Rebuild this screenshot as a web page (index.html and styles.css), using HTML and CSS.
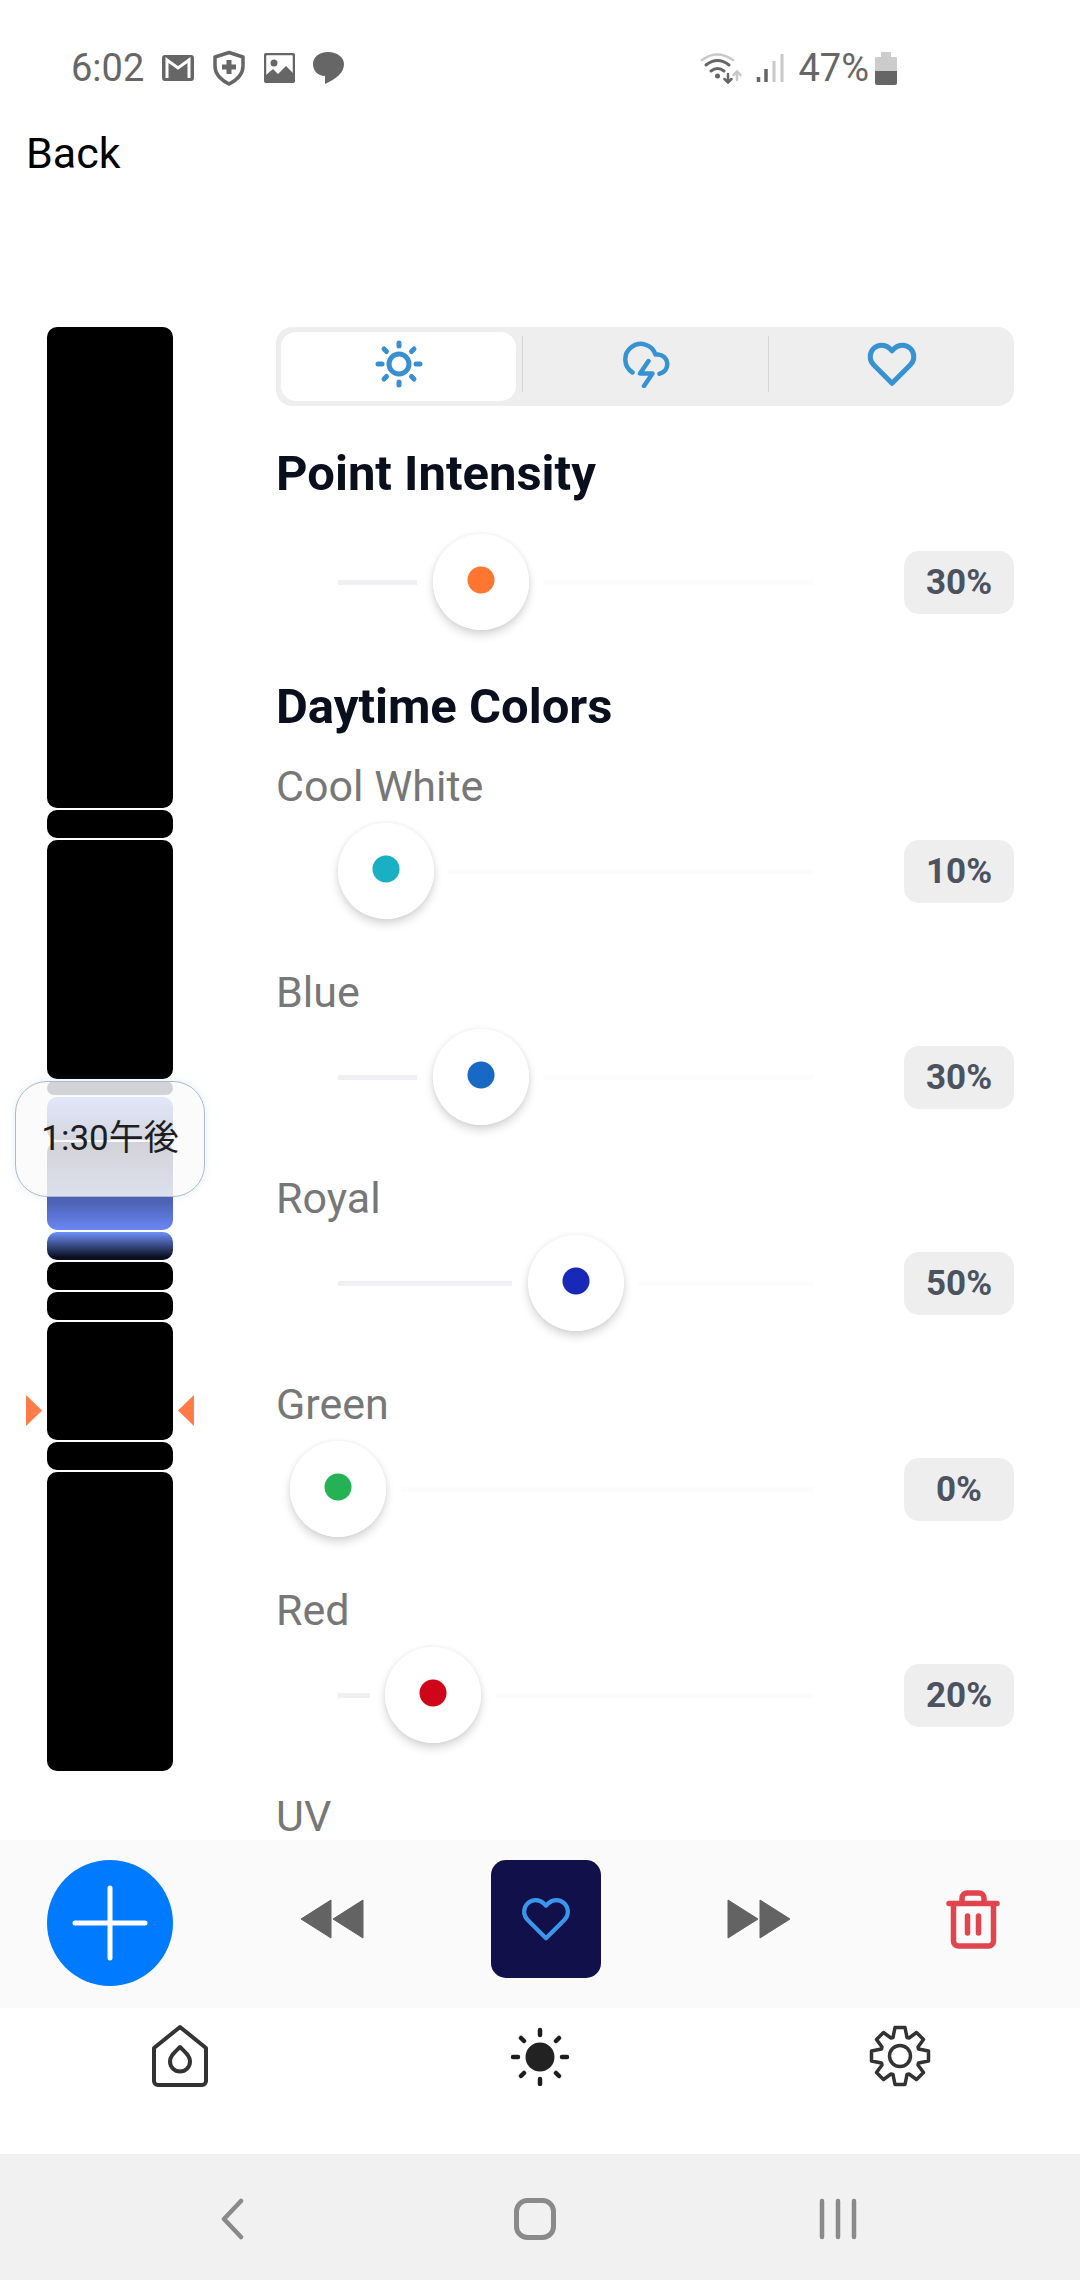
FILE: index.html
```html
<!DOCTYPE html>
<html lang="en">
<head>
<meta charset="utf-8">
<meta name="viewport" content="width=device-width, initial-scale=1">
<title>Light Schedule</title>
<link rel="stylesheet" href="styles.css">
</head>
<body>
<div class="app">
  <div class="status">
    <div class="status-group status-left">
      <span class="clock">6:02</span>
      <svg width="32" height="26" viewBox="0 0 32 26"><rect x="0" y="0" width="32" height="26" rx="3" fill="#666"/><path d="M5 23V5l11 8 11-8v18" fill="none" stroke="#fff" stroke-width="3"/></svg>
      <svg width="34" height="36" viewBox="0 0 34 36"><path d="M17 2.500L31 7v9c0 8-6 14-14 18C9 30 3 24 3 16V7z" fill="none" stroke="#666" stroke-width="3.500" stroke-linejoin="round"/><path d="M17 10v14M10 17h14" stroke="#666" stroke-width="5"/></svg>
      <svg width="31" height="30" viewBox="0 0 31 30"><rect x="1" y="1" width="29" height="28" rx="2" fill="none" stroke="#666" stroke-width="2.500"/><circle cx="10" cy="10" r="3.500" fill="#666"/><path d="M2 22l7-6 5 5 8-8 8 8v7H2z" fill="#666"/></svg>
      <svg width="31" height="32" viewBox="0 0 31 32"><path d="M15 0c9 0 16 5 16 12 0 9-8 15-19 20v-8C5 24 0 19 0 12 0 5 6 0 15 0z" fill="#666"/></svg>
    </div>
    <div class="status-group status-right">
      <svg width="42" height="32" viewBox="0 0 42 32" fill="none" stroke-linecap="round"><path d="M2 8Q17-3 33 8" stroke="#c8c8c8" stroke-width="2.500"/><path d="M6 13q11.500-9 23 0M11 19q6.500-5 13 0" stroke="#666" stroke-width="3"/><circle cx="17.500" cy="24" r="2.500" fill="#666"/><path d="M28 22v8M24.500 27l3.500 3.500 3.500-3.500" stroke="#666" stroke-width="2.500"/><path d="M37 28v-8M33.500 23l3.500-3.500 3.500 3.500" stroke="#c8c8c8" stroke-width="2.500"/></svg>
      <svg width="28" height="30" viewBox="0 0 28 30"><path d="M2.500 24v5M10 16v13" stroke="#666" stroke-width="3.500"/><path d="M18 8v21M26 1v28" stroke="#c8c8c8" stroke-width="3"/></svg>
      <span class="charge">47%</span>
      <svg width="22" height="33" viewBox="0 0 22 33"><path d="M6 0h10v5h5a1 1 0 0 1 1 1v13H0V6a1 1 0 0 1 1-1h5z" fill="#ccc"/><path d="M0 19h22v12a2 2 0 0 1-2 2H2a2 2 0 0 1-2-2z" fill="#666"/></svg>
    </div>
  </div>

  <header class="header"><a class="back" href="#">Back</a></header>

  <main class="main">
    <section class="timeline" aria-label="Schedule">
      <div class="segment" style="height:481px"></div>
      <div class="segment" style="height:28px"></div>
      <div class="segment" style="height:239px"></div>
      <div class="segment dawn" style="height:14px"></div>
      <div class="segment fade-out-slow" style="height:43px"></div>
      <div class="segment fade-in" style="height:88px"></div>
      <div class="segment fade-out" style="height:28px"></div>
      <div class="segment" style="height:28px"></div>
      <div class="segment" style="height:28px"></div>
      <div class="segment" style="height:118px"></div>
      <div class="segment" style="height:28px"></div>
      <div class="segment" style="height:299px"></div>
      <div class="time-bubble">1:30午後</div>
      <div class="now-marker">
        <svg width="16" height="31" viewBox="0 0 16 31"><path d="M0 0l16 15.500L0 31z" fill="#ff7b47"/></svg>
        <svg width="16" height="31" viewBox="0 0 16 31"><path d="M16 0v31L0 15.500z" fill="#ff7b47"/></svg>
      </div>
    </section>

    <section class="panel">
      <div class="tabs" role="tablist">
        <button class="tab selected" role="tab" aria-selected="true" aria-label="Sun">
          <svg width="50" height="50" viewBox="0 0 50 50" fill="none" stroke="#3a8fd0" stroke-width="5" stroke-linecap="round"><circle cx="25" cy="25" r="10"/><path d="M25 4v3M25 43v3M4 25h4M42 25h4M10 10l2.500 2.500M37.500 37.500L40 40M40 10l-2.500 2.500M12.500 37.500L10 40"/></svg>
        </button>
        <button class="tab" role="tab" aria-selected="false" aria-label="Storm">
          <svg width="48" height="48" viewBox="0 0 48 48" fill="none" stroke="#3792d2" stroke-width="4.500" stroke-linecap="round" stroke-linejoin="round"><path d="M10.500 32.500A15.500 15.500 0 1 1 33.500 14.500H36a9.700 9.700 0 0 1 1.500 19.200M26.500 21L18 33.500h12.500L22 46"/></svg>
        </button>
        <button class="tab" role="tab" aria-selected="false" aria-label="Favorites">
          <svg width="50" height="50" viewBox="0 0 24 24" fill="none" stroke="#3792d2" stroke-width="2.400" stroke-linejoin="round"><path d="M20.840 4.610a5.500 5.500 0 0 0-7.780 0L12 5.670l-1.060-1.060a5.500 5.500 0 0 0-7.780 7.780l1.060 1.060L12 21.230l7.780-7.780 1.060-1.060a5.500 5.500 0 0 0 0-7.780z"/></svg>
        </button>
      </div>

      <h2 class="title" id="intensity">Point Intensity</h2>
      <div class="row">
        <input class="slider orange" type="range" aria-labelledby="intensity" value="30" style="--value:30">
        <output class="badge">30%</output>
      </div>

      <h2 class="title">Daytime Colors</h2>
      <label class="label first" for="cool">Cool White</label>
      <div class="row">
        <input class="slider cyan" id="cool" type="range" value="10" style="--value:10">
        <output class="badge" for="cool">10%</output>
      </div>
      <label class="label" for="blue">Blue</label>
      <div class="row">
        <input class="slider blue" id="blue" type="range" value="30" style="--value:30">
        <output class="badge" for="blue">30%</output>
      </div>
      <label class="label" for="royal">Royal</label>
      <div class="row">
        <input class="slider royal" id="royal" type="range" value="50" style="--value:50">
        <output class="badge" for="royal">50%</output>
      </div>
      <label class="label" for="green">Green</label>
      <div class="row">
        <input class="slider green" id="green" type="range" value="0" style="--value:0">
        <output class="badge" for="green">0%</output>
      </div>
      <label class="label" for="red">Red</label>
      <div class="row">
        <input class="slider red" id="red" type="range" value="20" style="--value:20">
        <output class="badge" for="red">20%</output>
      </div>
      <div class="label">UV</div>
    </section>
  </main>

  <div class="toolbar">
    <button class="add" aria-label="Add point"><svg width="76" height="76" viewBox="0 0 76 76"><path d="M38 3v70M3 38h70" stroke="#fff" stroke-width="5" stroke-linecap="round"/></svg></button>
    <button class="plain" aria-label="Previous point"><svg width="64" height="40" viewBox="0 0 64 40"><path d="M1 20L31 1v38zM33 20L63 1v38z" fill="#636363" stroke="#636363" stroke-linejoin="round"/></svg></button>
    <button class="favorite" aria-label="Favorite"><svg width="50" height="46" viewBox="0.500 1 23 22" fill="none" stroke="#3a96ea" stroke-width="2" stroke-linejoin="round"><path d="M20.840 4.610a5.500 5.500 0 0 0-7.780 0L12 5.670l-1.060-1.060a5.500 5.500 0 0 0-7.780 7.780l1.060 1.060L12 21.230l7.780-7.780 1.060-1.060a5.500 5.500 0 0 0 0-7.780z"/></svg></button>
    <button class="plain" aria-label="Next point"><svg width="64" height="40" viewBox="0 0 64 40"><path d="M63 20L33 1v38zM31 20L1 1v38z" fill="#636363" stroke="#636363" stroke-linejoin="round"/></svg></button>
    <button class="trash" aria-label="Delete"><svg width="54" height="60" viewBox="0 0 54 60" fill="none" stroke="#e0444c" stroke-width="5.500" stroke-linecap="round" stroke-linejoin="round"><path d="M3 14.500h48M7.500 15v37a5 5 0 0 0 5 5h30a5 5 0 0 0 5-5V15M16 14V9a5 5 0 0 1 5-5h12a5 5 0 0 1 5 5v5M21.500 27v17M32.500 27v17"/></svg></button>
  </div>

  <nav class="bottom-tabs">
    <a href="#" aria-label="Home"><svg width="60" height="64" viewBox="0 0 60 64" fill="none" stroke="#333" stroke-width="4" stroke-linejoin="round"><path d="M30 3L56 24v33a4 4 0 0 1-4 4H8a4 4 0 0 1-4-4V24z"/><path d="M30 23c-6 6-10 9-10 14.500a10 10 0 0 0 20 0C40 32 36 29 30 23z"/></svg></a>
    <a href="#" aria-label="Light"><svg width="60" height="60" viewBox="0 0 60 60" stroke="#1d1d1d" stroke-width="4.500" stroke-linecap="round"><circle cx="30" cy="31" r="14.500" fill="#222" stroke="none"/><path d="M30 4v5M30 53v5M3 31h5M52 31h5M11 12l3 3M46 47l3 3M49 12l-3 3M14 47l-3 3"/></svg></a>
    <a href="#" aria-label="Settings"><svg width="62" height="62" viewBox="-31 -31 62 62" fill="none" stroke="#333" stroke-width="3.500" stroke-linejoin="round"><path d="M-5-28.500H5L7-18.500 9-18 16.500-23.500 23.500-16.500 18-9 18.500-7 28.500-5V5L18.500 7 18 9 23.500 16.500 16.500 23.500 9 18 7 18.500 5 28.500H-5L-7 18.500-9 18-16.500 23.500-23.500 16.500-18 9-18.500 7-28.500 5V-5L-18.500-7-18-9-23.500-16.500-16.500-23.500-9-18-7-18.500z"/><circle r="10.500"/></svg></a>
  </nav>

  <div class="system-nav">
    <button aria-label="System back"><svg width="24" height="42" viewBox="0 0 24 42"><path d="M21 3L4 21l17 18" fill="none" stroke="#8a8a8a" stroke-width="4.500" stroke-linecap="round" stroke-linejoin="round"/></svg></button>
    <button aria-label="System home"><svg width="42" height="42" viewBox="0 0 42 42"><rect x="2.500" y="2.500" width="37" height="37" rx="11" fill="none" stroke="#8a8a8a" stroke-width="5"/></svg></button>
    <button aria-label="Recent apps"><svg width="38" height="42" viewBox="0 0 38 42"><path d="M3 3v36M19 3v36M35 3v36" stroke="#8a8a8a" stroke-width="4.500" stroke-linecap="round"/></svg></button>
  </div>
</div>
</body>
</html>
```
FILE: styles.css
```css
* { box-sizing: border-box; }

body {
  margin: 0;
  background: #fff;
  color: #000;
  font-family: Roboto, "Noto Sans CJK JP", sans-serif;
}

button {
  display: flex;
  align-items: center;
  justify-content: center;
  padding: 0;
  border: 0;
  background: none;
}

svg { display: block; flex: none; }

.app {
  display: flex;
  flex-direction: column;
  height: 100vh;
}

/* Status bar */
.status {
  display: flex;
  justify-content: space-between;
  padding: 42px 183px 0 71px;
  color: #666;
  font-size: 38px;
  line-height: 52px;
}
.status-group { display: flex; align-items: center; }
.status-left { gap: 18px; }
.status-right { gap: 14px; }
.charge { margin-right: -8px; }

.header { padding: 34px 26px 0; }
.back {
  display: block;
  color: #000;
  font-size: 43px;
  line-height: 50px;
  text-decoration: none;
}

/* Main area */
.main {
  display: flex;
  flex: 1;
  gap: 103px;
  min-height: 0;
  padding: 149px 66px 0 47px;
  overflow: hidden;
}

.timeline {
  position: relative;
  display: flex;
  flex: none;
  flex-direction: column;
  gap: 2px;
  width: 126px;
}
.segment {
  flex: none;
  border-radius: 10px;
  background: #000;
}
.dawn { background: #10142a; }
.fade-in { background: linear-gradient(#10142a, #6a87f5); }
.fade-out { background: linear-gradient(#6f92fb, #0a0e20 90%); }
.fade-out-slow { background: linear-gradient(#6a87f5, #1c2450); }

.time-bubble {
  position: absolute;
  top: 754px;
  left: -32px;
  width: 190px;
  border: 1px solid #a9bacd;
  border-radius: 32px;
  background: rgba(250, 250, 251, 0.83);
  box-shadow: 0 0 8px rgba(120, 170, 240, 0.2);
  color: #1c1e22;
  font-size: 35px;
  line-height: 114px;
  text-align: center;
  white-space: nowrap;
}
.now-marker {
  position: absolute;
  top: 1068px;
  left: -21px;
  right: -21px;
  display: flex;
  justify-content: space-between;
}

/* Controls */
.panel { flex: 1; min-width: 0; }

.tabs {
  display: grid;
  grid-template-columns: repeat(3, 1fr);
  height: 79px;
  border-radius: 16px;
  background: #eee;
}
.tab {
  margin: 9px 0 14px;
  border-left: 1px solid #d6d6d6;
}
.tab.selected {
  margin: 5px 6px 5px 5px;
  padding-bottom: 6px;
  border-left: 0;
  border-radius: 15px;
  background: #fff;
}

.title {
  margin: 40px 0 32px;
  color: #0a0f1d;
  font-size: 49px;
  font-weight: 700;
  line-height: 56px;
}
.row + .title { margin: 49px 0 26px; }

.label {
  display: block;
  margin-top: 48px;
  margin-bottom: 12px;
  color: #777;
  font-size: 43px;
  line-height: 50px;
}
.label.first { margin-top: 0; }

.row {
  display: flex;
  align-items: center;
  gap: 43px;
  padding-left: 14px;
}

.slider {
  --center: calc(48px + (100% - 96px) * var(--value) / 100);
  flex: 1;
  min-width: 0;
  height: 96px;
  margin: 0;
  appearance: none;
  background:
    linear-gradient(to right,
      transparent 48px,
      #f0f0f4 48px calc(var(--center) - 63px),
      transparent calc(var(--center) - 63px) calc(var(--center) + 63px),
      #fcfcfd calc(var(--center) + 63px) calc(100% - 48px),
      transparent calc(100% - 48px))
    center / 100% 5px no-repeat;
}
.slider::-webkit-slider-thumb {
  appearance: none;
  width: 96px;
  height: 96px;
  border-radius: 50%;
  background: radial-gradient(circle at 48px 46px, var(--dot) 13px, #fff 14px);
  box-shadow: 0 5px 10px rgba(0, 0, 0, 0.16), 0 0 5px rgba(0, 0, 0, 0.06);
}
.orange { --dot: #ff7630; }
.cyan { --dot: #1ab0c4; }
.blue { --dot: #1769c4; }
.royal { --dot: #1829b8; }
.green { --dot: #25b254; }
.red { --dot: #cf0619; }

.badge {
  width: 110px;
  border-radius: 15px;
  background: #eee;
  color: #4b5260;
  font-size: 35px;
  font-weight: 700;
  line-height: 63px;
  text-align: center;
}

/* Point toolbar */
.toolbar {
  display: flex;
  flex: none;
  justify-content: space-between;
  height: 168px;
  padding: 20px 52px 22px 47px;
  background: #fafafa;
}
.add {
  width: 126px;
  height: 126px;
  border-radius: 50%;
  background: #007aff;
}
.plain { height: 118px; }
.favorite {
  width: 110px;
  height: 118px;
  border-radius: 15px;
  background: #12104a;
}
.trash { width: 110px; height: 118px; }

.bottom-tabs {
  display: grid;
  flex: none;
  grid-template-columns: repeat(3, 1fr);
  justify-items: center;
  height: 146px;
  padding-top: 16px;
}
.bottom-tabs a {
  display: flex;
  align-items: center;
  height: 64px;
}

.system-nav {
  display: grid;
  flex: none;
  grid-template-columns: repeat(3, 1fr);
  height: 126px;
  padding: 4px 90px 0 80px;
  background: #f1f1f1;
}
```
